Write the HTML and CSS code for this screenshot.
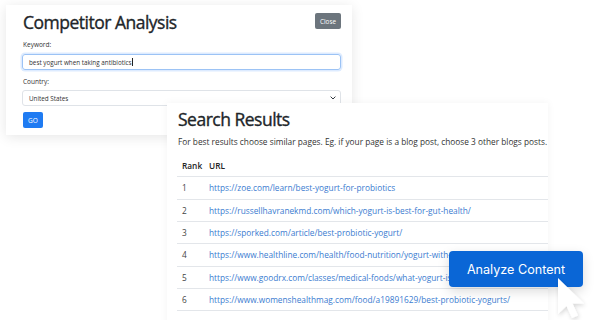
FILE: index.html
```html
<!DOCTYPE html>
<html>
<head>
<meta charset="utf-8">
<link rel="stylesheet" href="styles.css">
</head>
<body>
<div class="stage">
  <section class="card card-form">
    <div class="form-head">
      <h1 class="form-title">Competitor Analysis</h1>
      <button class="btn-close">Close</button>
    </div>
    <label class="field-label">Keyword:</label>
    <div class="input input-focus"><span>best yogurt when taking antibiotics</span><span class="caret"></span></div>
    <label class="field-label field-label-2">Country:</label>
    <div class="input select"><span>United States</span>
      <svg class="chev" width="6" height="4" viewBox="0 0 6 4"><path d="M0.6 0.6 L3 3 L5.4 0.6" fill="none" stroke="#343a40" stroke-width="1"/></svg>
    </div>
    <button class="btn-go">GO</button>
  </section>

  <section class="card card-results">
    <h2 class="res-title">Search Results</h2>
    <p class="res-sub">For best results choose similar pages. Eg. if your page is a blog post, choose 3 other blogs posts.</p>
    <div class="table">
      <div class="row head"><div class="c-rank">Rank</div><div class="c-url">URL</div></div>
      <div class="row"><div class="c-rank">1</div><div class="c-url"><a>https://zoe.com/learn/best-yogurt-for-probiotics</a></div></div>
      <div class="row"><div class="c-rank">2</div><div class="c-url"><a>https://russellhavranekmd.com/which-yogurt-is-best-for-gut-health/</a></div></div>
      <div class="row"><div class="c-rank">3</div><div class="c-url"><a>https://sporked.com/article/best-probiotic-yogurt/</a></div></div>
      <div class="row"><div class="c-rank">4</div><div class="c-url"><a>https://www.healthline.com/health/food-nutrition/yogurt-with-probiotics</a></div></div>
      <div class="row"><div class="c-rank">5</div><div class="c-url"><a>https://www.goodrx.com/classes/medical-foods/what-yogurt-is-best-for-probiotics</a></div></div>
      <div class="row"><div class="c-rank">6</div><div class="c-url"><a>https://www.womenshealthmag.com/food/a19891629/best-probiotic-yogurts/</a></div></div>
    </div>
  </section>

  <button class="btn-analyze">Analyze Content</button>
  <svg class="cursor" width="40" height="50" viewBox="0 0 40 50">
    <defs>
      <filter id="sh" x="-50%" y="-50%" width="200%" height="200%">
        <feDropShadow dx="1" dy="2" stdDeviation="2" flood-color="#000" flood-opacity="0.16"/>
      </filter>
    </defs>
    <path d="M4 4 L4 40 L12.5 32 L18 44 L24 41.5 L18.5 29.5 L30 29.5 Z" fill="#fff" filter="url(#sh)"/>
  </svg>
</div>
</body>
</html>
```

FILE: styles.css
```css
* { box-sizing: border-box; }
html, body { margin: 0; padding: 0; background: #fff; }
body { width: 596px; height: 320px; overflow: hidden; font-family: "Open Sans", "Liberation Sans", sans-serif; color: #212529; }

.stage {
  position: relative;
  width: 596px;
  height: 320px;
  display: grid;
  grid-template-columns: 596px;
  grid-template-rows: 320px;
}

.card {
  grid-area: 1 / 1;
  background: #fff;
  align-self: start;
  justify-self: start;
}

.card-form {
  margin: 5px 0 0 6px;
  width: 346px;
  height: 130px;
  padding: 0 11px 0 16px;
  box-shadow: 0 2px 12px rgba(0,0,0,0.10);
}

.form-head {
  display: flex;
  justify-content: space-between;
  align-items: flex-start;
  height: 34px;
}
.form-title {
  margin: 0 0 0 1px;
  font-size: 17.5px;
  line-height: 34px;
  font-weight: 400;
  letter-spacing: -0.5px;
  -webkit-text-stroke: 0.35px #212529;
  color: #212529;
}
.btn-close {
  margin-top: 8px;
  width: 26px;
  height: 16px;
  padding: 0;
  border: 0;
  border-radius: 2px;
  background: #6c757d;
  color: #fff;
  font-family: inherit;
  font-size: 6.3px;
}

.field-label {
  display: block;
  margin-left: 1px;
  height: 12px;
  line-height: 12px;
  font-size: 6.5px;
  color: #333;
  margin-bottom: 3px;
}
.field-label-2 { margin-top: 6px; margin-bottom: 2px; }

.input {
  height: 16px;
  border: 1px solid #dfe3e8;
  border-radius: 3px;
  padding: 0 6px;
  display: flex;
  align-items: center;
  font-size: 6.3px;
  color: #333;
}
.input-focus {
  border-color: #9cc3f5;
  box-shadow: 0 0 0 1.5px rgba(13,110,253,0.14);
}
.caret {
  display: inline-block;
  width: 0.6px;
  height: 8px;
  background: #222;
}
.select { justify-content: space-between; padding-right: 4px; }

.btn-go {
  margin-top: 6px;
  width: 20px;
  height: 16px;
  padding: 0;
  border: 0;
  border-radius: 2px;
  background: #1f7bf2;
  color: #fff;
  font-family: inherit;
  font-size: 6.5px;
  margin-left: 1px;
  display: block;
}

.card-results {
  margin: 103px 0 0 167px;
  width: 381px;
  height: 230px;
  padding: 0 0 0 10px;
  box-shadow: 0 0 8px rgba(0,0,0,0.05);
}
.res-title {
  margin: 0 0 0 1px;
  font-size: 17.5px;
  line-height: 33px;
  font-weight: 400;
  letter-spacing: -0.5px;
  -webkit-text-stroke: 0.35px #212529;
  color: #212529;
}
.res-sub {
  margin: 0 0 8px 1px;
  font-size: 8.3px;
  line-height: 11px;
  color: #333;
  white-space: nowrap;
}

.table { display: flex; flex-direction: column; }
.row {
  display: flex;
  align-items: center;
  height: 22.33px;
  border-bottom: 1px solid #e3e6ea;
  font-size: 8.3px;
  white-space: nowrap;
  overflow: hidden;
}
.row.head { font-weight: 600; color: #222; }
.c-rank { width: 27px; padding-left: 5px; color: #444; flex: none; }
.row.head .c-rank { color: #222; }
.c-url { padding-left: 5px; }
.c-url a { color: #3a7bd0; text-decoration: none; }

.btn-analyze {
  position: absolute;
  left: 449px;
  top: 251px;
  width: 134px;
  height: 36px;
  border: 0;
  border-radius: 4px;
  background: #0a66d6;
  color: #fff;
  font-family: "Inter", "Lato", sans-serif;
  font-size: 12.6px;
  font-weight: 400;
  letter-spacing: 0;
  box-shadow: 0 4px 12px rgba(0,0,0,0.15);
  padding: 0;
}

.cursor {
  position: absolute;
  left: 554px;
  top: 274px;
}
```
